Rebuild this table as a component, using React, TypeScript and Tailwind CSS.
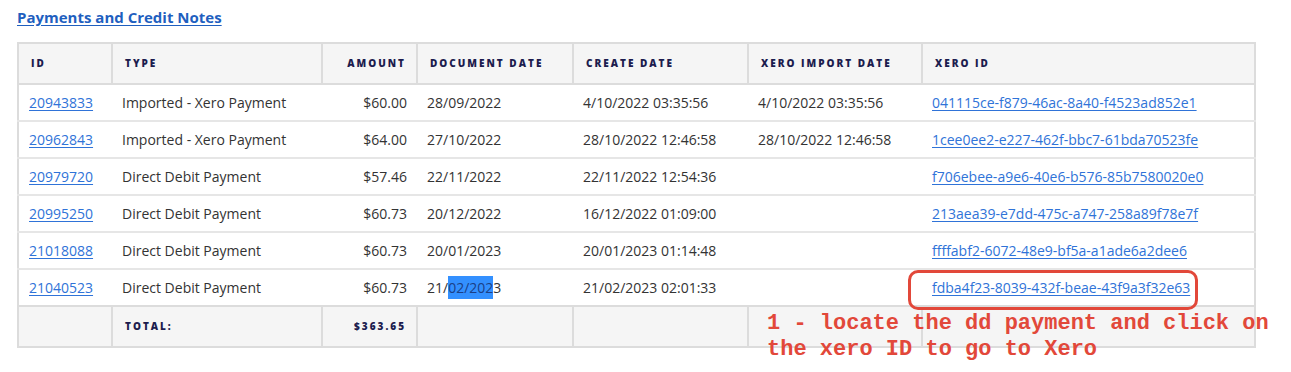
import React from "react"

type Row = {
  id: string
  type: string
  amount: string
  docDate: string
  created: string
  imported: string
  xeroId: string
}

const rows: Row[] = [
  { id: "20943833", type: "Imported - Xero Payment", amount: "$60.00", docDate: "28/09/2022", created: "4/10/2022 03:35:56", imported: "4/10/2022 03:35:56", xeroId: "041115ce-f879-46ac-8a40-f4523ad852e1" },
  { id: "20962843", type: "Imported - Xero Payment", amount: "$64.00", docDate: "27/10/2022", created: "28/10/2022 12:46:58", imported: "28/10/2022 12:46:58", xeroId: "1cee0ee2-e227-462f-bbc7-61bda70523fe" },
  { id: "20979720", type: "Direct Debit Payment", amount: "$57.46", docDate: "22/11/2022", created: "22/11/2022 12:54:36", imported: "", xeroId: "f706ebee-a9e6-40e6-b576-85b7580020e0" },
  { id: "20995250", type: "Direct Debit Payment", amount: "$60.73", docDate: "20/12/2022", created: "16/12/2022 01:09:00", imported: "", xeroId: "213aea39-e7dd-475c-a747-258a89f78e7f" },
  { id: "21018088", type: "Direct Debit Payment", amount: "$60.73", docDate: "20/01/2023", created: "20/01/2023 01:14:48", imported: "", xeroId: "ffffabf2-6072-48e9-bf5a-a1ade6a2dee6" },
  { id: "21040523", type: "Direct Debit Payment", amount: "$60.73", docDate: "21/02/2023", created: "21/02/2023 02:01:33", imported: "", xeroId: "fdba4f23-8039-432f-beae-43f9a3f32e63" },
]

const th = "border-2 border-[#dcdcdc] px-3 text-left text-[10px] font-black uppercase tracking-[2px] text-[#1c1c4e]"
const td = "px-[10px] h-[37px] whitespace-nowrap"
const link = "text-[#2f73d8] underline underline-offset-2 decoration-1"

function App() {
  return (
    <div className="relative h-[372px] w-[1291px] bg-white text-[14px] text-[#333] font-['Open_Sans',sans-serif]">
      <div className="px-[17px] pt-[6px]">
        <a className="text-[15px] font-bold text-[#1f5fbf] underline underline-offset-2">Payments and Credit Notes</a>

        <table className="mt-[13px] w-[1239px] table-fixed border-collapse border-2 border-[#dcdcdc]">
          <colgroup>
            <col className="w-[94px]" />
            <col className="w-[210px]" />
            <col className="w-[95px]" />
            <col className="w-[156px]" />
            <col className="w-[175px]" />
            <col className="w-[174px]" />
            <col />
          </colgroup>
          <thead>
            <tr className="h-[41px] bg-[#f5f5f5]">
              <th className={th}>ID</th>
              <th className={th}>Type</th>
              <th className={th + " !text-right !px-[10px]"}>Amount</th>
              <th className={th}>Document Date</th>
              <th className={th}>Create Date</th>
              <th className={th}>Xero Import Date</th>
              <th className={th}>Xero ID</th>
            </tr>
          </thead>
          <tbody>
            {rows.map((r, i) => (
              <tr key={r.id} className={i < rows.length - 1 ? "border-b-2 border-[#e6e6e6]" : ""}>
                <td className={td}><a className={link}>{r.id}</a></td>
                <td className={td}>{r.type}</td>
                <td className={td + " text-right"}>{r.amount}</td>
                <td className={td}>
                  {i === rows.length - 1 ? (
                    <>21/<span className="bg-[#3390ff] py-[2px] text-[#1b3f86]">02/202</span>3</>
                  ) : r.docDate}
                </td>
                <td className={td}>{r.created}</td>
                <td className={td}>{r.imported}</td>
                <td className={td}><a className={link}>{r.xeroId}</a></td>
              </tr>
            ))}
            <tr className="h-[41px] bg-[#f5f5f5]">
              <td className="border-2 border-[#dcdcdc]"></td>
              <td className={th}>Total:</td>
              <td className={th + " !text-right !px-[10px]"}>$363.65</td>
              <td className="border-2 border-[#dcdcdc]"></td>
              <td className="border-2 border-[#dcdcdc]"></td>
              <td className="border-2 border-[#dcdcdc]"></td>
              <td className="border-2 border-[#dcdcdc]"></td>
            </tr>
          </tbody>
        </table>
      </div>

      {/* annotation drawn over the screenshot */}
      <div className="absolute left-[908px] top-[270px] h-[40px] w-[290px] rounded-[10px] border-[3px] border-[#e2483a]"></div>
      <div className="absolute left-[767px] top-[311px] text-[22px] font-bold leading-[26px] text-[#e2483a] font-['Liberation_Mono',monospace]">
        <div>1 - locate the dd payment and click on</div>
        <div>the xero ID to go to Xero</div>
      </div>
    </div>
  )
}

export default App
